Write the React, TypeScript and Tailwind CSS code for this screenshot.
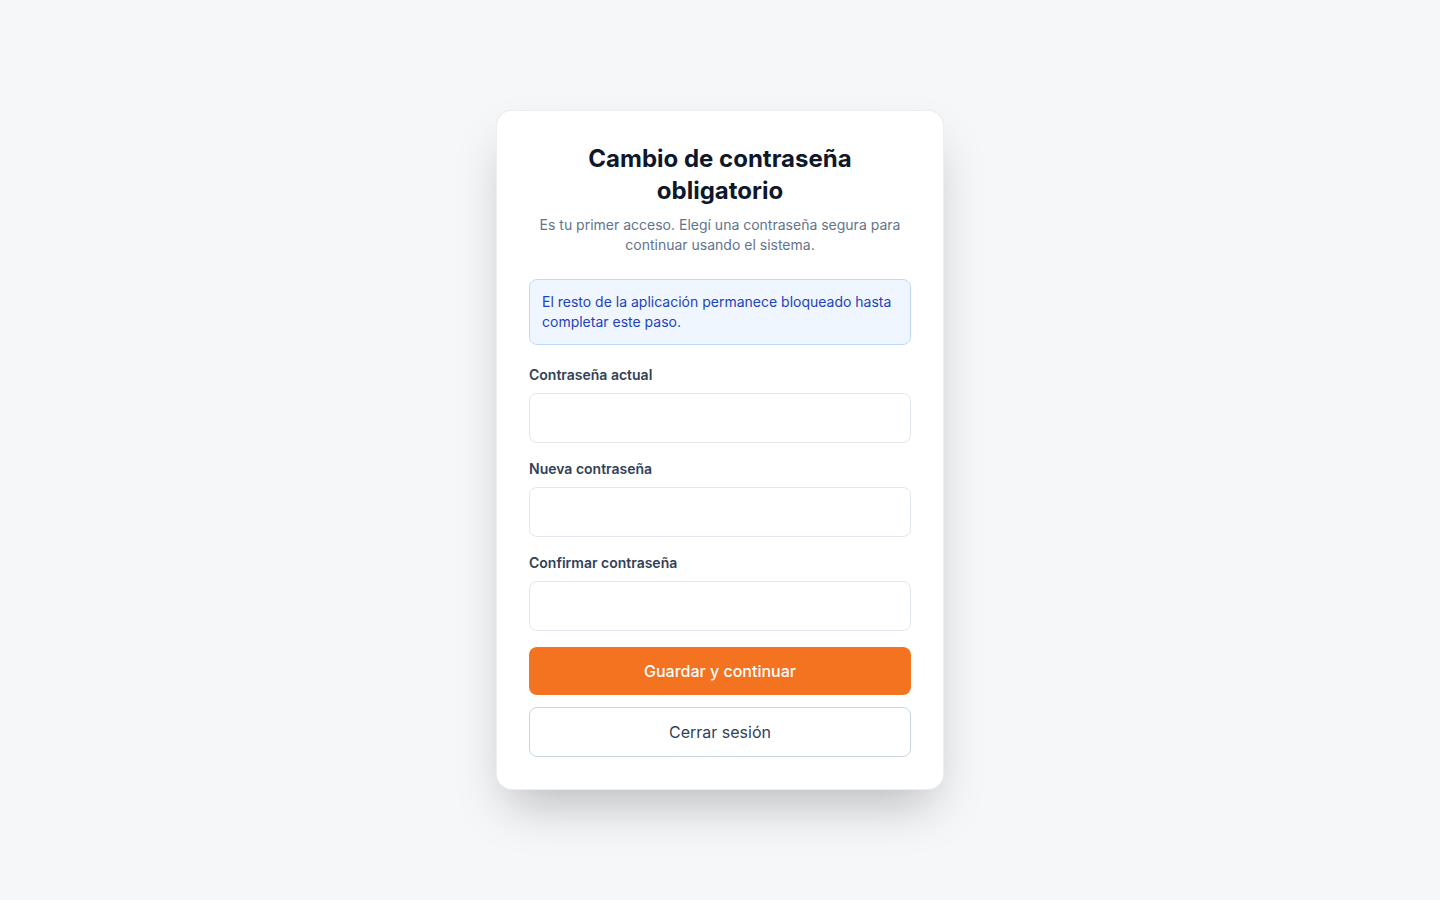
const fields = [
  { id: "actual", label: "Contraseña actual" },
  { id: "nueva", label: "Nueva contraseña" },
  { id: "confirmar", label: "Confirmar contraseña" },
];

export default function App() {
  return (
    <div
      className="flex min-h-screen items-center justify-center bg-[#f6f7f9] px-4"
      style={{ fontFamily: "Inter, 'Noto Sans', sans-serif" }}
    >
      <div className="w-full max-w-md rounded-2xl border border-slate-200/70 bg-white p-8 shadow-2xl">
        <h1 className="text-center text-2xl leading-8 font-bold text-slate-900">
          Cambio de contraseña obligatorio
        </h1>
        <p className="mt-2 text-center text-sm leading-5 text-slate-500">
          Es tu primer acceso. Elegí una contraseña segura para continuar usando el sistema.
        </p>

        <div className="mt-6 rounded-lg border border-blue-200 bg-blue-50 px-3 py-3 text-sm leading-5 text-[#2342bd]">
          El resto de la aplicación permanece bloqueado hasta completar este paso.
        </div>

        <form className="mt-5 flex flex-col" onSubmit={(e) => e.preventDefault()}>
          <div className="flex flex-col gap-4">
            {fields.map((f) => (
              <div key={f.id} className="flex flex-col gap-2">
                <label htmlFor={f.id} className="text-sm leading-5 font-semibold text-slate-700">
                  {f.label}
                </label>
                <input
                  id={f.id}
                  type="password"
                  className="h-[50px] w-full rounded-lg border border-slate-200 bg-white px-3 text-base text-slate-900 outline-none focus:border-orange-400"
                />
              </div>
            ))}
          </div>

          <button
            type="submit"
            className="mt-4 h-12 w-full rounded-lg bg-[#f37321] text-base font-medium text-white"
          >
            Guardar y continuar
          </button>
          <button
            type="button"
            className="mt-3 h-[50px] w-full rounded-lg border border-slate-300 bg-white text-base text-slate-700"
          >
            Cerrar sesión
          </button>
        </form>
      </div>
    </div>
  );
}
